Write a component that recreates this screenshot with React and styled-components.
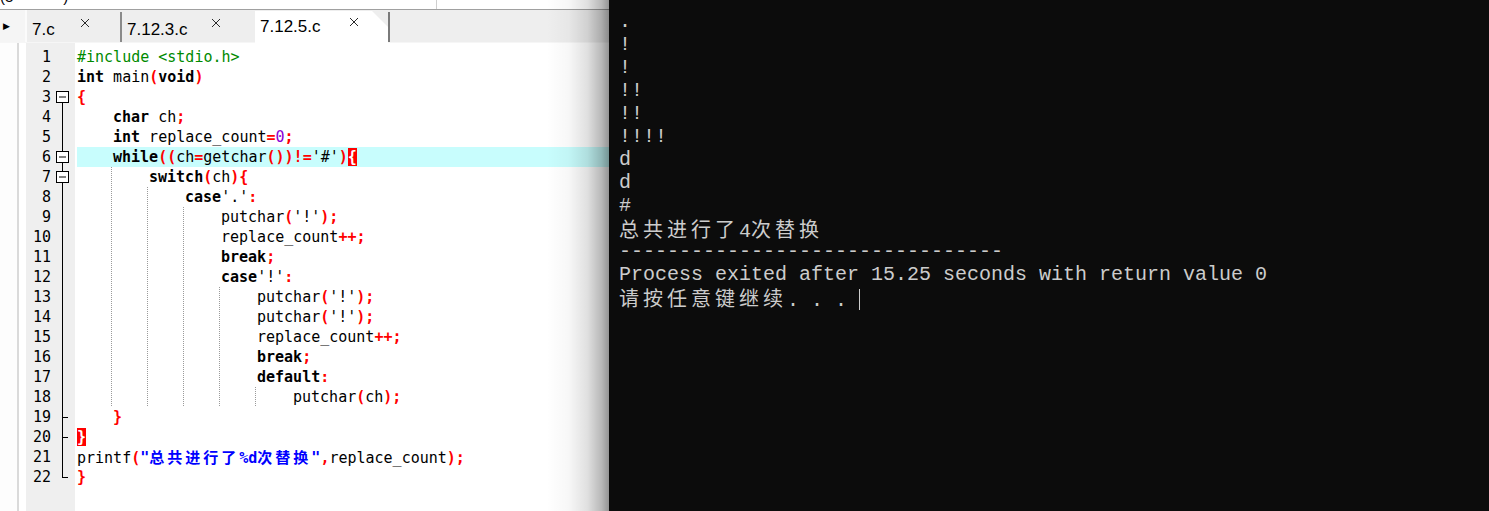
import React from 'react';
import styled, { createGlobalStyle, css } from 'styled-components';

const Global = createGlobalStyle`
  html, body { margin: 0; padding: 0; background: #0c0c0c; }
  body { width: 1489px; height: 511px; overflow: hidden; }
`;

const Screen = styled.div`
  display: flex;
  width: 1489px;
  height: 511px;
  overflow: hidden;
`;

const EditorPane = styled.div`
  position: relative;
  width: 609px;
  flex: none;
  display: flex;
  flex-direction: column;
  background: #ffffff;
  overflow: hidden;
  &::after {
    content: '';
    position: absolute;
    top: 0;
    right: 0;
    bottom: 0;
    width: 62px;
    pointer-events: none;
    background: linear-gradient(
      to right,
      rgba(0, 0, 0, 0) 0%,
      rgba(0, 0, 0, 0.03) 35%,
      rgba(0, 0, 0, 0.12) 65%,
      rgba(0, 0, 0, 0.28) 88%,
      rgba(0, 0, 0, 0.42) 100%
    );
  }
`;

const TopStrip = styled.div`
  height: 9px;
  flex: none;
  display: flex;
  border-bottom: 1px solid #a0a0a0;
  overflow: hidden;
  background: #ffffff;
`;

const TopCell = styled.div`
  width: 436px;
  flex: none;
  border-right: 1px solid #cfcfcf;
  overflow: hidden;
  display: flex;
  gap: 50px;
  font: 15px/16px "Liberation Sans", Arial, sans-serif;
  color: #000;
  & > span { margin-top: -11px; }
`;

const TabBar = styled.div`
  height: 33px;
  flex: none;
  display: flex;
  background: #eeeeee;
  border-bottom: 1px solid #f6f6f6;
  box-sizing: border-box;
`;

const ScrollButton = styled.div`
  width: 27px;
  flex: none;
  display: flex;
  align-items: center;
  padding-left: 3px;
  box-sizing: border-box;
  background: #f5f5f5;
  border-right: 2px solid #fbfbfb;
  font: 9px "DejaVu Sans", sans-serif;
  color: #000;
`;

const Tab = styled.div`
  width: ${p => p.$w}px;
  flex: none;
  box-sizing: border-box;
  display: flex;
  padding-left: 5px;
  background: ${p => (p.$active ? '#ffffff' : '#eeeeee')};
  border-right: ${p => (p.$sep ? '2px solid #8a8a8a' : 'none')};
  margin-top: ${p => (p.$active ? '1px' : '2px')};
  ${p =>
    p.$active &&
    css`
      clip-path: polygon(0 0, calc(100% - 16px) 0, 100% 16px, 100% 100%, 0 100%);
      margin-bottom: -1px;
    `}
`;

const TabLabel = styled.span`
  font: 17px/20px "Liberation Sans", Arial, sans-serif;
  color: #000;
  margin-top: ${p => (p.$active ? '6px' : '8px')};
  width: ${p => p.$labelW}px;
`;

const CloseBox = styled.span`
  display: flex;
  margin-top: 6px;
  height: 10px;
`;

const TabEdge = styled.div`
  width: 2px;
  flex: none;
  margin-top: 2px;
  background: #7a7a7a;
`;

const EditorBody = styled.div`
  flex: 1;
  display: flex;
  min-height: 0;
`;

const LeftStrip = styled.div`
  width: 26px;
  flex: none;
  background: linear-gradient(to right, #fdfdfd 0 17px, #dadada 17px 19px, #ffffff 19px 100%);
`;

const Gutter = styled.div`
  width: 49px;
  flex: none;
  background: #efefef;
  padding-top: 4px;
  display: flex;
  flex-direction: column;
`;

const GutterRow = styled.div`
  height: 20px;
  display: flex;
`;

const LineNo = styled.span`
  width: 25px;
  text-align: right;
  font: 15px/20px "DejaVu Sans Mono", monospace;
  color: #000;
`;

const FoldCell = styled.span`
  width: 24px;
  display: flex;
`;

const CodeArea = styled.div`
  flex: 1;
  padding: 4px 0 0 2px;
  display: flex;
  flex-direction: column;
  font: 15px/20px "DejaVu Sans Mono", monospace;
  color: #000;
`;

const CodeLine = styled.div`
  height: 20px;
  white-space: pre;
  background: ${p => (p.$hl ? '#c8fdfd' : 'transparent')};
`;

const IndentUnit = styled.span`
  display: inline-block;
  width: 36px;
  height: 20px;
  vertical-align: top;
  ${p =>
    p.$guide &&
    css`
      background-image: repeating-linear-gradient(to bottom, #9a9a9a 0 1px, transparent 1px 2px);
      background-size: 1px 100%;
      background-position: 34px 0;
      background-repeat: no-repeat;
    `}
`;

const tokenStyles = {
  pp: css`color: #008a00;`,
  kw: css`font-weight: bold; color: #000;`,
  sym: css`font-weight: bold; color: #ff0000;`,
  num: css`color: #8a00d4;`,
  str: css`font-weight: bold; color: #0000ff;`,
  chr: css`color: #000;`,
  id: css`color: #000;`,
  bh: css`font-weight: bold; color: #ffffff; background: #ff0000;`,
};

const Tok = styled.span`
  ${p => tokenStyles[p.$t]}
`;

const CodeCJK = styled.span`
  font-family: "Noto Sans CJK SC", sans-serif;
  font-size: 15px;
  letter-spacing: 3px;
`;

const ConsolePane = styled.div`
  flex: 1;
  background: #0c0c0c;
  color: #cccccc;
  padding: 10px 0 0 10px;
  display: flex;
  flex-direction: column;
  font: 20px/23px "Liberation Mono", "DejaVu Sans Mono", monospace;
`;

const ConsoleLine = styled.div`
  height: 23px;
  white-space: pre;
`;

const ConsoleCJK = styled.span`
  font-family: "Noto Sans CJK SC", sans-serif;
  font-size: 20px;
  letter-spacing: 4px;
`;

const Cursor = styled.span`
  display: inline-block;
  width: 1px;
  height: 21px;
  background: #cccccc;
  vertical-align: -4px;
`;

const CloseIcon = () => (
  <svg width="10" height="10" viewBox="0 0 10 10">
    <path d="M1 1 L9 9 M9 1 L1 9" stroke="#2a2a2a" strokeWidth="1" fill="none" />
  </svg>
);

const Fold = ({ kind }) => {
  const line = '#000';
  return (
    <svg width="24" height="20" viewBox="0 0 24 20">
      {(kind === 'box' || kind === 'boxmid') && (
        <>
          {kind === 'boxmid' && <line x1="11.5" y1="0" x2="11.5" y2="4" stroke={line} />}
          <rect x="5.5" y="4.5" width="12" height="11" fill="#fff" stroke={line} />
          <line x1="8" y1="10" x2="15" y2="10" stroke={line} />
          <line x1="11.5" y1="15.5" x2="11.5" y2="20" stroke={line} />
        </>
      )}
      {kind === 'line' && <line x1="11.5" y1="0" x2="11.5" y2="20" stroke={line} />}
      {kind === 'tick' && (
        <>
          <line x1="11.5" y1="0" x2="11.5" y2="20" stroke={line} />
          <line x1="11.5" y1="10.5" x2="17" y2="10.5" stroke={line} />
        </>
      )}
      {kind === 'end' && (
        <>
          <line x1="11.5" y1="0" x2="11.5" y2="11" stroke={line} />
          <line x1="11.5" y1="10.5" x2="17" y2="10.5" stroke={line} />
        </>
      )}
    </svg>
  );
};

const code = [
  { ind: 0, fold: 'none', t: [['pp', '#include <stdio.h>']] },
  { ind: 0, fold: 'none', t: [['kw', 'int'], ['id', ' main'], ['sym', '('], ['kw', 'void'], ['sym', ')']] },
  { ind: 0, fold: 'box', t: [['sym', '{']] },
  { ind: 1, fold: 'line', t: [['kw', 'char'], ['id', ' ch'], ['sym', ';']] },
  { ind: 1, fold: 'line', t: [['kw', 'int'], ['id', ' replace_count'], ['sym', '='], ['num', '0'], ['sym', ';']] },
  {
    ind: 1,
    fold: 'boxmid',
    hl: true,
    t: [['kw', 'while'], ['sym', '(('], ['id', 'ch'], ['sym', '='], ['id', 'getchar'], ['sym', '())!='], ['chr', "'#'"], ['sym', ')'], ['bh', '{']],
  },
  { ind: 2, fold: 'boxmid', t: [['kw', 'switch'], ['sym', '('], ['id', 'ch'], ['sym', '){']] },
  { ind: 3, fold: 'line', t: [['kw', 'case'], ['chr', "'.'"], ['sym', ':']] },
  { ind: 4, fold: 'line', t: [['id', 'putchar'], ['sym', '('], ['chr', "'!'"], ['sym', ');']] },
  { ind: 4, fold: 'line', t: [['id', 'replace_count'], ['sym', '++;']] },
  { ind: 4, fold: 'line', t: [['kw', 'break'], ['sym', ';']] },
  { ind: 4, fold: 'line', t: [['kw', 'case'], ['chr', "'!'"], ['sym', ':']] },
  { ind: 5, fold: 'line', t: [['id', 'putchar'], ['sym', '('], ['chr', "'!'"], ['sym', ');']] },
  { ind: 5, fold: 'line', t: [['id', 'putchar'], ['sym', '('], ['chr', "'!'"], ['sym', ');']] },
  { ind: 5, fold: 'line', t: [['id', 'replace_count'], ['sym', '++;']] },
  { ind: 5, fold: 'line', t: [['kw', 'break'], ['sym', ';']] },
  { ind: 5, fold: 'line', t: [['kw', 'default'], ['sym', ':']] },
  { ind: 6, fold: 'line', t: [['id', 'putchar'], ['sym', '('], ['id', 'ch'], ['sym', ');']] },
  { ind: 1, fold: 'tick', t: [['sym', '}']] },
  { ind: 0, fold: 'tick', t: [['bh', '}']] },
  {
    ind: 0,
    fold: 'line',
    t: [['id', 'printf'], ['sym', '('], ['str', '"', '总共进行了', '%d', '次替换', '"'], ['sym', ','], ['id', 'replace_count'], ['sym', ');']],
  },
  { ind: 0, fold: 'end', t: [['sym', '}']] },
];

const renderToken = (tok, i) => {
  const [type, ...parts] = tok;
  if (type === 'str') {
    return (
      <Tok key={i} $t="str">
        {parts.map((p, j) => (/[\u4e00-\u9fff]/.test(p) ? <CodeCJK key={j}>{p}</CodeCJK> : <React.Fragment key={j}>{p}</React.Fragment>))}
      </Tok>
    );
  }
  return (
    <Tok key={i} $t={type}>
      {parts[0]}
    </Tok>
  );
};

const consoleLines = [
  ['.'],
  ['!'],
  ['!'],
  ['!!'],
  ['!!'],
  ['!!!!'],
  ['d'],
  ['d'],
  ['#'],
  [{ cjk: '总共进行了' }, '4', { cjk: '次替换' }],
  ['--------------------------------'],
  ['Process exited after 15.25 seconds with return value 0'],
  [{ cjk: '请按任意键继续' }, '. . . ', { cursor: true }],
];

export default function App() {
  return (
    <>
      <Global />
      <Screen>
        <EditorPane>
          <TopStrip>
            <TopCell>
              <span>(3</span>
              <span>)</span>
            </TopCell>
          </TopStrip>
          <TabBar>
            <ScrollButton>▶</ScrollButton>
            <Tab $w={95} $sep>
              <TabLabel $labelW={48}>7.c</TabLabel>
              <CloseBox>
                <CloseIcon />
              </CloseBox>
            </Tab>
            <Tab $w={133}>
              <TabLabel $labelW={84}>7.12.3.c</TabLabel>
              <CloseBox>
                <CloseIcon />
              </CloseBox>
            </Tab>
            <Tab $w={133} $active>
              <TabLabel $active $labelW={89}>7.12.5.c</TabLabel>
              <CloseBox>
                <CloseIcon />
              </CloseBox>
            </Tab>
            <TabEdge />
          </TabBar>
          <EditorBody>
            <LeftStrip />
            <Gutter>
              {code.map((l, i) => (
                <GutterRow key={i}>
                  <LineNo>{i + 1}</LineNo>
                  <FoldCell>{l.fold !== 'none' && <Fold kind={l.fold} />}</FoldCell>
                </GutterRow>
              ))}
            </Gutter>
            <CodeArea>
              {code.map((l, i) => (
                <CodeLine key={i} $hl={l.hl}>
                  {Array.from({ length: l.ind }).map((_, k) => (
                    <IndentUnit key={k} $guide={k < l.ind - 1} />
                  ))}
                  {l.t.map(renderToken)}
                </CodeLine>
              ))}
            </CodeArea>
          </EditorBody>
        </EditorPane>
        <ConsolePane>
          {consoleLines.map((parts, i) => (
            <ConsoleLine key={i}>
              {parts.map((p, j) =>
                typeof p === 'string' ? (
                  <React.Fragment key={j}>{p}</React.Fragment>
                ) : p.cjk ? (
                  <ConsoleCJK key={j}>{p.cjk}</ConsoleCJK>
                ) : (
                  <Cursor key={j} />
                )
              )}
            </ConsoleLine>
          ))}
        </ConsolePane>
      </Screen>
    </>
  );
}
